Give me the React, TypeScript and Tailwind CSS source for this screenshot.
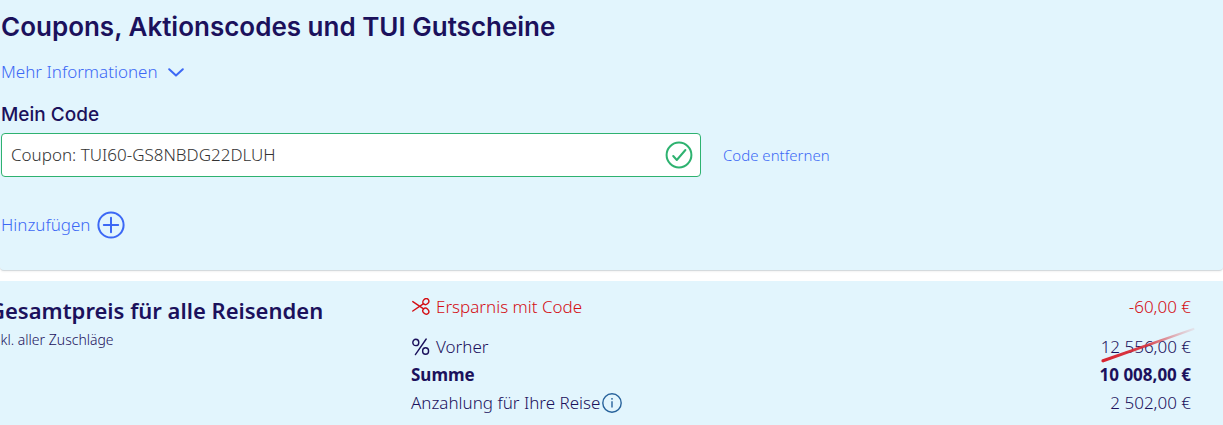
import { useState } from 'react';

interface IconProps {
  className?: string;
}

function ChevronIcon({ className }: IconProps) {
  return (
    <svg viewBox="0 0 16 9" fill="none" stroke="currentColor" strokeWidth="2" strokeLinecap="round" strokeLinejoin="round" className={className} aria-hidden="true">
      <path d="M1.2 1.2L8 7.6l6.8-6.4" />
    </svg>
  );
}

function CheckCircleIcon({ className }: IconProps) {
  return (
    <svg viewBox="0 0 28 28" fill="none" stroke="currentColor" strokeWidth="2" strokeLinecap="round" strokeLinejoin="round" className={className} aria-hidden="true">
      <circle cx="14" cy="14" r="12.4" />
      <path d="M8.2 15l3.6 4L20.4 9" />
    </svg>
  );
}

function PlusCircleIcon({ className }: IconProps) {
  return (
    <svg viewBox="0 0 28 28" fill="none" stroke="currentColor" strokeWidth="2" strokeLinecap="round" className={className} aria-hidden="true">
      <circle cx="14" cy="14" r="12.6" />
      <path d="M14 6.8v14.4M6.8 14h14.4" />
    </svg>
  );
}

function ScissorsIcon({ className }: IconProps) {
  return (
    <svg viewBox="0 0 18 18" fill="none" stroke="currentColor" strokeWidth="1.4" strokeLinecap="round" strokeLinejoin="round" className={className} aria-hidden="true">
      <path d="M0.8 3.6l10.8 7.2M0.8 13l10.8-7.4" />
      <ellipse cx="13.8" cy="3.6" rx="3.2" ry="2.7" transform="rotate(-45 13.8 3.6)" />
      <ellipse cx="13.8" cy="13.2" rx="3.2" ry="2.7" transform="rotate(45 13.8 13.2)" />
    </svg>
  );
}

function PercentIcon({ className }: IconProps) {
  return (
    <svg viewBox="0 0 18 18" fill="none" stroke="currentColor" strokeWidth="1.4" strokeLinecap="round" className={className} aria-hidden="true">
      <path d="M14.2 1L3.4 16.6" />
      <ellipse cx="3.8" cy="4.4" rx="3" ry="3.2" />
      <ellipse cx="13.6" cy="13" rx="3" ry="3.2" />
    </svg>
  );
}

function InfoIcon({ className }: IconProps) {
  return (
    <svg viewBox="0 0 20 20" fill="none" stroke="currentColor" className={className} aria-hidden="true">
      <circle cx="10" cy="10" r="9.2" strokeWidth="1.4" />
      <path d="M10 8.2v6.4" strokeWidth="1.4" />
      <circle cx="10" cy="5.8" r="0.9" fill="currentColor" stroke="none" />
    </svg>
  );
}

// red pen stroke that fades out over the former price
function StrikeStroke({ className }: IconProps) {
  return (
    <svg viewBox="0 0 96 36" className={className} aria-hidden="true">
      <defs>
        <linearGradient id="strike" x1="0" y1="0" x2="1" y2="0">
          <stop offset="0" stopColor="#d8232f" />
          <stop offset="0.5" stopColor="#d8303a" stopOpacity="0.9" />
          <stop offset="1" stopColor="#e08a90" stopOpacity="0.15" />
        </linearGradient>
      </defs>
      <path d="M2.8 32.6L95 0.8L95.6 2.8L4 35.4Q1.6 35 2.8 32.6Z" fill="url(#strike)" />
    </svg>
  );
}

export default function App() {
  const [code, setCode] = useState('Coupon: TUI60-GS8NBDG22DLUH');

  return (
    <div className="flex min-h-screen flex-col overflow-hidden bg-white font-['Noto_Sans','Open_Sans',sans-serif] font-light text-[#1b115c]">
      <section className="rounded-b border-b border-[#d5dadd] bg-[#e2f5fd] pt-[7px] pb-[31px] pl-px shadow-xs">
        <h2 className="font-['Inter',sans-serif] text-[26px] leading-10 font-semibold">
          Coupons, Aktionscodes und TUI Gutscheine
        </h2>
        <button type="button" className="mt-[13px] flex items-center gap-2.5 text-[17px] leading-6 text-[#3c68f5]">
          Mehr Informationen
          <ChevronIcon className="h-[9px] w-4" />
        </button>

        <label htmlFor="code" className="mt-[17px] block font-['Inter',sans-serif] text-[19px] leading-7 font-medium">
          Mein Code
        </label>
        <div className="mt-1 flex items-center gap-[22px]">
          <div className="flex h-11 w-[700px] items-center rounded border border-[#2eb270] bg-white pr-[7px] pl-[9px]">
            <input
              id="code"
              type="text"
              value={code}
              onChange={(e) => setCode(e.target.value)}
              className="min-w-0 flex-1 bg-transparent text-[17px] leading-6 text-[#333333] outline-none"
            />
            <CheckCircleIcon className="size-7 text-[#2eb270]" />
          </div>
          <button type="button" className="text-[15px] leading-6 text-[#3c68f5]" onClick={() => setCode('')}>
            Code entfernen
          </button>
        </div>

        <button type="button" className="mt-[34px] flex items-center gap-1.5 text-[17px] leading-6 text-[#3c68f5]">
          Hinzufügen
          <PlusCircleIcon className="size-7" />
        </button>
      </section>

      <section className="mt-2.5 flex flex-1 bg-[#e2f5fd] pt-3 pr-8">
        <div className="-ml-[11px] w-[422px] shrink-0">
          <h2 className="pt-px text-[22px] leading-8 font-semibold whitespace-nowrap">Gesamtpreis für alle Reisenden</h2>
          <p className="mt-0.5 text-[14px] leading-6">inkl. aller Zuschläge</p>
        </div>
        <dl className="flex-1 text-[17px] leading-7">
          <div className="mb-3 flex justify-between text-[#d40e14]">
            <dt className="flex items-center gap-1.5">
              <ScissorsIcon className="ml-px size-[18px]" />
              Ersparnis mit Code
            </dt>
            <dd>-60,00 €</dd>
          </div>
          <div className="flex justify-between">
            <dt className="flex items-center gap-1.5">
              <PercentIcon className="ml-px size-[18px]" />
              Vorher
            </dt>
            <dd className="relative">
              12 556,00 €
              <StrikeStroke className="absolute -right-1 -bottom-0.5 h-9 w-24" />
            </dd>
          </div>
          <div className="flex justify-between font-bold">
            <dt>Summe</dt>
            <dd>10 008,00 €</dd>
          </div>
          <div className="flex justify-between">
            <dt className="flex items-center gap-0.5">
              Anzahlung für Ihre Reise
              <button type="button" aria-label="Informationen zur Anzahlung" className="text-[#27629b]">
                <InfoIcon className="size-5" />
              </button>
            </dt>
            <dd>2 502,00 €</dd>
          </div>
        </dl>
      </section>
    </div>
  );
}
